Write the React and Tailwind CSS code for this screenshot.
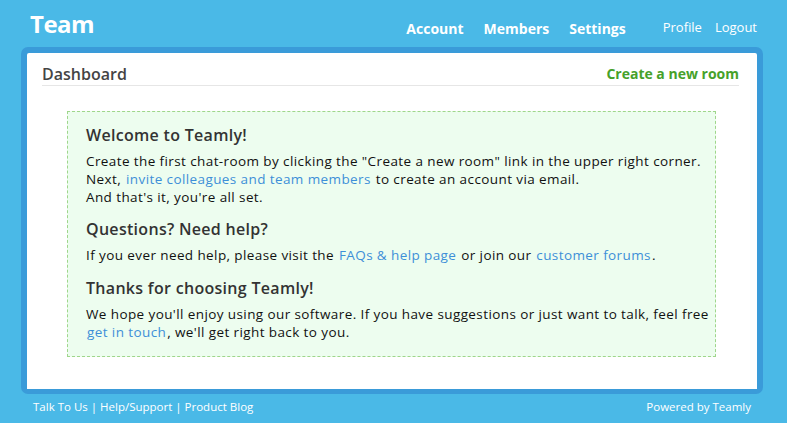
export default function App() {
  const font = { fontFamily: '"Open Sans", "Liberation Sans", sans-serif' };
  return (
    <div className="w-[787px] h-[423px] bg-[#4ab9e7] text-[#222]" style={font}>
      <header className="h-[47px] flex items-center pl-[30px] pr-[30px]">
        <div className="text-white font-bold text-[24px] tracking-[-0.5px] leading-none">Team</div>
        <nav className="ml-auto flex items-center mt-[9px]">
          <a className="text-white font-bold text-[14px]">Account</a>
          <a className="text-white font-bold text-[14px] ml-[20px]">Members</a>
          <a className="text-white font-bold text-[14px] ml-[20px]">Settings</a>
          <a className="text-white text-[13px] ml-[37px]">Profile</a>
          <a className="text-white text-[13px] ml-[13px]">Logout</a>
        </nav>
      </header>
      <main className="ml-[21px] w-[742px] h-[347px] rounded-[7px] bg-[#3a9bd9] p-[6px] pb-[5px]">
        <div className="bg-white h-full rounded-t-[2px] pl-[15px] pr-[18px] pt-[10px]">
          <div className="flex items-center justify-between h-[21px] border-b border-[#e6e6e6] pb-[1px] box-content">
            <h1 className="text-[16px] font-semibold text-[#444]">Dashboard</h1>
            <a className="text-[14px] font-bold text-[#46a12a]">Create a new room</a>
          </div>
          <div className="ml-[25px] mr-[23px] mt-[25px] h-[246px] border border-dashed border-[#9fd68b] bg-[#edfdef] px-[18px] pt-[12px] text-[13.5px] tracking-[0.4px] leading-[18px] text-[#111] whitespace-nowrap">
            <h2 className="text-[16px] font-semibold text-[#333] leading-[22px] tracking-[0.3px]">Welcome to Teamly!</h2>
            <p className="mt-[6px]">
              Create the first chat-room by clicking the "Create a new room" link in the upper right corner.<br />
              Next, <a className="text-[#3d8fd8] px-[1px]">invite colleagues and team members</a> to create an account via email.<br />
              And that's it, you're all set.
            </p>
            <h2 className="text-[16px] font-semibold text-[#333] leading-[22px] tracking-[0.3px] mt-[12px]">Questions? Need help?</h2>
            <p className="mt-[6px]">
              If you ever need help, please visit the <a className="text-[#3d8fd8] px-[1px]">FAQs &amp; help page</a> or join our <a className="text-[#3d8fd8] px-[1px]">customer forums</a>.
            </p>
            <h2 className="text-[16px] font-semibold text-[#333] leading-[22px] tracking-[0.3px] mt-[13px]">Thanks for choosing Teamly!</h2>
            <p className="mt-[6px]">
              We hope you'll enjoy using our software. If you have suggestions or just want to talk, feel free<br />
              <a className="text-[#3d8fd8] pl-[1px] pr-[1px]">get in touch</a>, we'll get right back to you.
            </p>
          </div>
        </div>
      </main>
      <footer className="flex justify-between pl-[33px] pr-[36px] pt-[4px] text-[11.5px] text-white">
        <div>Talk To Us | Help/Support | Product Blog</div>
        <div>Powered by Teamly</div>
      </footer>
    </div>
  );
}
